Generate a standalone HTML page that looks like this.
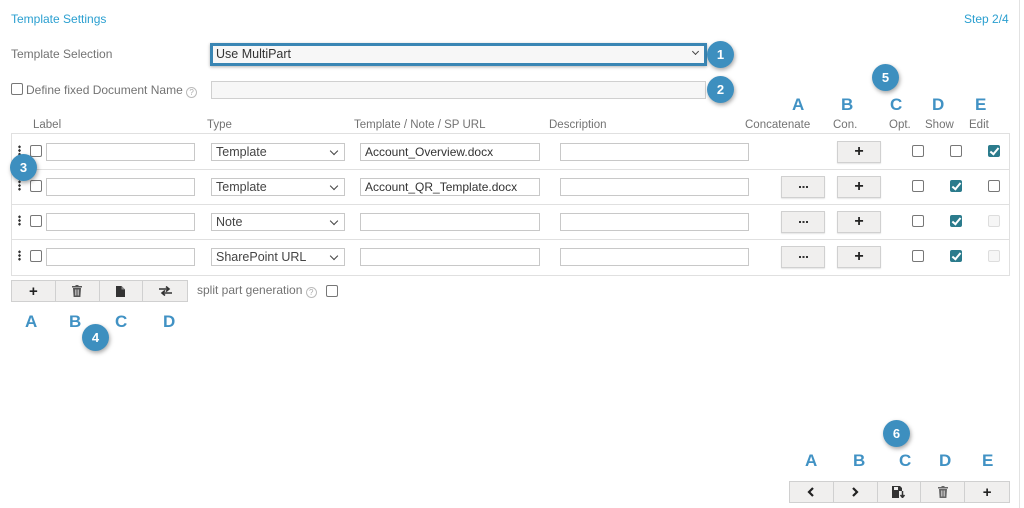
<!DOCTYPE html>
<html><head><meta charset="utf-8"><style>
*{box-sizing:border-box;margin:0;padding:0}
body{width:1024px;height:508px;background:#fff;position:relative;overflow:hidden;font-family:"Liberation Sans",sans-serif;font-size:11.5px;color:#737373}
.a{position:absolute}
.t{position:absolute;white-space:nowrap;line-height:14px}
.blue{color:#2a9fd0}
.badge{position:absolute;width:27px;height:27px;border-radius:50%;background:#3d8fbf;color:#fff;font-size:13px;font-weight:bold;text-align:center;line-height:27px;box-shadow:1px 2px 4px rgba(0,0,0,.35)}
.L{position:absolute;color:#4192c4;font-weight:bold;font-size:17px;line-height:18px}
.inp{position:absolute;height:18px;border:1px solid #c8c8c8;background:#fff;font-size:12px;color:#333;padding-left:4px;line-height:16px}
.sel{position:absolute;height:18px;border:1px solid #c8c8c8;background:#fff;font-size:12.5px;color:#444;padding-left:4px;line-height:16px}
.sel:after{content:"";position:absolute;right:7px;top:4px;width:5px;height:5px;border-right:1.6px solid #444;border-bottom:1.6px solid #444;transform:rotate(45deg)}
.cb{position:absolute;width:12px;height:12px;border:1px solid #777;border-radius:2px;background:#fff}
.cb.on{background:#2b7b8c;border-color:#2b7b8c}
.cb.on:after{content:"";position:absolute;left:3px;top:0px;width:3px;height:7px;border-right:2px solid #fff;border-bottom:2px solid #fff;transform:rotate(40deg)}
.cb.dis{border-color:#ddd;background:#f6f6f6}
.btn{position:absolute;height:22px;width:44px;background:#f0efee;border:1px solid #d0d0d0;text-align:center;font-weight:bold;color:#222;font-size:16px;line-height:19px;box-shadow:0 1px 1px rgba(0,0,0,.1)}
.dd{position:absolute;height:22px;width:44px;background:#f0efee;border:1px solid #d0d0d0;box-shadow:0 1px 1px rgba(0,0,0,.1)}
.dd:after{content:"";position:absolute;left:17px;top:9px;width:9px;height:2px;background:repeating-linear-gradient(90deg,#333 0 2px,transparent 2px 3.5px)}
.dots{position:absolute;width:3px;height:11px;background:radial-gradient(circle,#333 1.2px,transparent 1.4px) 0 0/3px 3.7px}
.hl{position:absolute;left:11px;width:998px;height:1px;background:#e0e0e0}
.bar{position:absolute;display:flex;height:22px;border:1px solid #d0d0d0;background:#f0efee}
.bar div{width:44px;border-right:1px solid #d0d0d0;display:flex;align-items:center;justify-content:center;font-weight:bold;font-size:15px;color:#222}
.bar div:last-child{border-right:none}
.q{display:inline-block;width:11px;height:11px;border:1px solid #bbb;border-radius:50%;font-size:8px;line-height:9px;text-align:center;color:#aaa;vertical-align:-1px}
</style></head><body>
<div class="a" style="left:1019px;top:0;width:1px;height:508px;background:#e2e2e2"></div>
<div class="t blue" style="left:11px;top:12px;font-size:12px">Template Settings</div>
<div class="t blue" style="left:964px;top:12px;font-size:12px">Step 2/4</div>

<div class="t" style="left:11px;top:47px;font-size:12px">Template Selection</div>
<div class="a" style="left:210px;top:43px;width:497px;height:23px;border:3px solid #3a86b4;background:#f7f7f7;box-shadow:0 1px 3px rgba(0,0,0,.3);font-size:12.5px;color:#333;padding-left:3px;line-height:17px">Use MultiPart</div>
<div class="a" style="left:693px;top:49px;width:5px;height:5px;border-right:1.6px solid #444;border-bottom:1.6px solid #444;transform:rotate(45deg)"></div>
<div class="badge" style="left:707px;top:41px">1</div>

<div class="cb" style="left:11px;top:83px"></div>
<div class="t" style="left:26px;top:83px;font-size:12px">Define fixed Document Name <span class="q">?</span></div>
<div class="a" style="left:211px;top:81px;width:495px;height:18px;border:1px solid #d0d0d0;background:#f7f7f7"></div>
<div class="badge" style="left:707px;top:76px">2</div>
<div class="badge" style="left:872px;top:64px">5</div>

<div class="L" style="left:792px;top:96px">A</div>
<div class="L" style="left:841px;top:96px">B</div>
<div class="L" style="left:890px;top:96px">C</div>
<div class="L" style="left:932px;top:96px">D</div>
<div class="L" style="left:975px;top:96px">E</div>

<div class="t" style="left:33px;top:118px">Label</div>
<div class="t" style="left:207px;top:118px">Type</div>
<div class="t" style="left:354px;top:118px">Template / Note / SP URL</div>
<div class="t" style="left:549px;top:118px">Description</div>
<div class="t" style="left:745px;top:118px">Concatenate</div>
<div class="t" style="left:833px;top:118px">Con.</div>
<div class="t" style="left:889px;top:118px">Opt.</div>
<div class="t" style="left:925px;top:118px">Show</div>
<div class="t" style="left:969px;top:118px">Edit</div>

<div class="a" style="left:11px;top:133px;width:999px;height:143px;border:1px solid #e0e0e0"></div>
<div class="hl" style="top:169px"></div>
<div class="hl" style="top:204px"></div>
<div class="hl" style="top:239px"></div>

<div class="dots" style="left:18px;top:145px"></div><div class="cb" style="left:30px;top:145px"></div>
<div class="inp" style="left:46px;top:143px;width:149px"></div>
<div class="sel" style="left:211px;top:143px;width:134px">Template</div>
<div class="inp" style="left:360px;top:143px;width:180px">Account_Overview.docx</div>
<div class="inp" style="left:560px;top:143px;width:189px"></div>
<div class="btn" style="left:837px;top:141px">+</div>
<div class="cb" style="left:912px;top:145px"></div><div class="cb" style="left:950px;top:145px"></div><div class="cb on" style="left:988px;top:145px"></div>

<div class="dots" style="left:18px;top:180px"></div><div class="cb" style="left:30px;top:180px"></div>
<div class="inp" style="left:46px;top:178px;width:149px"></div>
<div class="sel" style="left:211px;top:178px;width:134px">Template</div>
<div class="inp" style="left:360px;top:178px;width:180px">Account_QR_Template.docx</div>
<div class="inp" style="left:560px;top:178px;width:189px"></div>
<div class="dd" style="left:781px;top:176px"></div>
<div class="btn" style="left:837px;top:176px">+</div>
<div class="cb" style="left:912px;top:180px"></div><div class="cb on" style="left:950px;top:180px"></div><div class="cb" style="left:988px;top:180px"></div>

<div class="dots" style="left:18px;top:215px"></div><div class="cb" style="left:30px;top:215px"></div>
<div class="inp" style="left:46px;top:213px;width:149px"></div>
<div class="sel" style="left:211px;top:213px;width:134px">Note</div>
<div class="inp" style="left:360px;top:213px;width:180px"></div>
<div class="inp" style="left:560px;top:213px;width:189px"></div>
<div class="dd" style="left:781px;top:211px"></div>
<div class="btn" style="left:837px;top:211px">+</div>
<div class="cb" style="left:912px;top:215px"></div><div class="cb on" style="left:950px;top:215px"></div><div class="cb dis" style="left:988px;top:215px"></div>

<div class="dots" style="left:18px;top:250px"></div><div class="cb" style="left:30px;top:250px"></div>
<div class="inp" style="left:46px;top:248px;width:149px"></div>
<div class="sel" style="left:211px;top:248px;width:134px">SharePoint URL</div>
<div class="inp" style="left:360px;top:248px;width:180px"></div>
<div class="inp" style="left:560px;top:248px;width:189px"></div>
<div class="dd" style="left:781px;top:246px"></div>
<div class="btn" style="left:837px;top:246px">+</div>
<div class="cb" style="left:912px;top:250px"></div><div class="cb on" style="left:950px;top:250px"></div><div class="cb dis" style="left:988px;top:250px"></div>

<div class="badge" style="left:10px;top:154px">3</div>

<div class="bar" style="left:11px;top:280px;width:177px">
<div>+</div>
<div><svg width="10" height="12" viewBox="0 0 10 12"><rect x="0" y="1" width="10" height="1.5" fill="#555"/><rect x="3.5" y="0" width="3" height="1.5" fill="#555"/><path d="M1 3h8l-.6 9H1.6z" fill="#555"/><path d="M3.5 4.5v6M5 4.5v6M6.5 4.5v6" stroke="#f0efee" stroke-width=".6"/></svg></div>
<div><svg width="9" height="11" viewBox="0 0 9 11"><path d="M0 0h5.5L9 3.5V11H0z" fill="#333"/><path d="M5.5 0v3.5H9" fill="#888"/></svg></div>
<div><svg width="13" height="10" viewBox="0 0 13 10"><path d="M0 3h10M7 0.5l3 2.5-3 2.5M13 7H3M6 4.5L3 7l3 2.5" stroke="#333" stroke-width="1.6" fill="none"/></svg></div>
</div>
<div class="t" style="left:197px;top:283px;font-size:12px">split part generation <span class="q">?</span></div>
<div class="cb" style="left:326px;top:285px"></div>

<div class="L" style="left:25px;top:313px">A</div>
<div class="L" style="left:69px;top:313px">B</div>
<div class="L" style="left:115px;top:313px">C</div>
<div class="L" style="left:163px;top:313px">D</div>
<div class="badge" style="left:82px;top:324px">4</div>

<div class="badge" style="left:883px;top:420px">6</div>
<div class="L" style="left:805px;top:452px">A</div>
<div class="L" style="left:853px;top:452px">B</div>
<div class="L" style="left:899px;top:452px">C</div>
<div class="L" style="left:939px;top:452px">D</div>
<div class="L" style="left:982px;top:452px">E</div>
<div class="bar" style="left:789px;top:481px;width:221px">
<div><svg width="8" height="10" viewBox="0 0 8 10"><path d="M6 1L2 5l4 4" stroke="#222" stroke-width="2.2" fill="none"/></svg></div>
<div><svg width="8" height="10" viewBox="0 0 8 10"><path d="M2 1l4 4-4 4" stroke="#222" stroke-width="2.2" fill="none"/></svg></div>
<div><svg width="14" height="12" viewBox="0 0 14 12"><path d="M0 0h8l2 2v3H7v7H0z" fill="#333"/><rect x="2" y="1" width="4" height="3" fill="#f0efee"/><path d="M10.5 5v6M8.5 9l2 2.5 2-2.5" stroke="#333" stroke-width="1.5" fill="none"/></svg></div>
<div><svg width="10" height="12" viewBox="0 0 10 12"><rect x="0" y="1" width="10" height="1.5" fill="#666"/><rect x="3.5" y="0" width="3" height="1.5" fill="#666"/><path d="M1 3h8l-.6 9H1.6z" fill="#666"/><path d="M3.5 4.5v6M5 4.5v6M6.5 4.5v6" stroke="#f0efee" stroke-width=".6"/></svg></div>
<div>+</div>
</div>
</body></html>
